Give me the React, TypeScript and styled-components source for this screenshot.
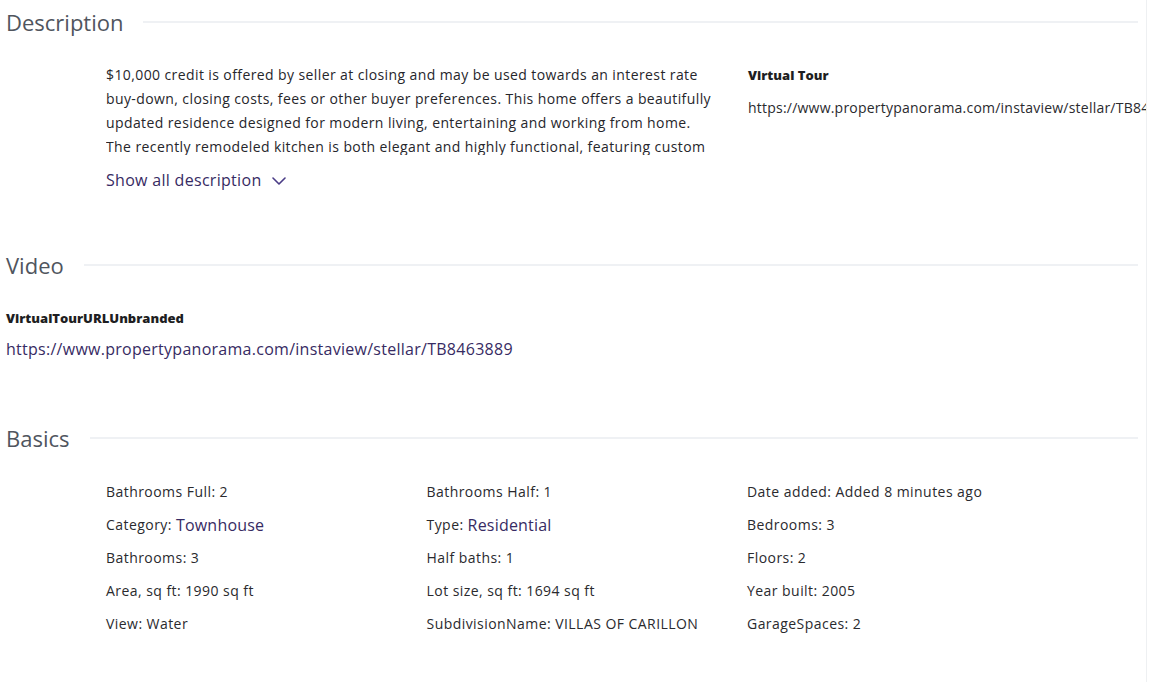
import styled, { createGlobalStyle } from 'styled-components';

const GlobalStyle = createGlobalStyle`
body {
	margin: 0;
	background: #ffffff;
	font-family: "Open Sans", Lato, Arial, sans-serif;
	color: #2a2a2e;
}
`;

const Page = styled.div`
width: 1132px;
min-height: 682px;
padding: 0 8px 0 6px;
border-right: 1px solid #eef0f2;
overflow: hidden;
`;

const Section = styled.section<{ $top: number }>`
margin-top: ${(p) => p.$top}px;
`;

const SectionHeader = styled.div<{ $gap: number }>`
display: flex;
align-items: center;
gap: ${(p) => p.$gap}px;
height: 44px;
`;

const SectionTitle = styled.h2`
margin: 0;
font-size: 22px;
font-weight: 400;
color: #50555e;
`;

const Divider = styled.div`
flex: 1;
height: 2px;
background: #eff1f4;
`;

const DescriptionBody = styled.div`
display: grid;
grid-template-columns: 606px 1fr;
column-gap: 36px;
padding-left: 100px;
margin-top: 19px;
`;

const DescriptionText = styled.p`
margin: 0;
max-height: 92px;
overflow: hidden;
font-size: 14px;
letter-spacing: 0.4px;
line-height: 24px;
color: #26262b;
`;

const ShowAll = styled.button`
display: flex;
align-items: center;
gap: 10px;
margin-top: 13px;
padding: 0;
border: none;
background: none;
font-family: inherit;
font-size: 16px;
letter-spacing: 0.3px;
line-height: 24px;
color: #372b63;
cursor: pointer;
svg {
	width: 14px;
	height: 8px;
	margin-top: 1px;
}
`;

const Field = styled.div`
white-space: nowrap;
`;

const FieldLabel = styled.div`
font-size: 13px;
font-weight: 800;
line-height: 24px;
color: #1e1e22;
`;

const PlainUrl = styled.div`
margin-top: 9px;
font-size: 14px;
letter-spacing: 0.22px;
line-height: 24px;
color: #2a2a2e;
`;

const LinkUrl = styled.a`
display: block;
margin-top: 7px;
font-size: 16px;
letter-spacing: 0.27px;
line-height: 24px;
color: #372b63;
text-decoration: none;
`;

const VideoBody = styled.div`
margin-top: 19px;
`;

const BasicsGrid = styled.div`
display: grid;
grid-template-columns: repeat(3, 320.5px);
grid-auto-rows: 33px;
padding-left: 100px;
margin-top: 15px;
`;

const BasicItem = styled.div`
display: flex;
align-items: center;
gap: 4px;
font-size: 14px;
letter-spacing: 0.45px;
color: #2a2a2e;
white-space: nowrap;
`;

const BasicLink = styled.a`
font-size: 16px;
letter-spacing: 0.2px;
color: #372b63;
text-decoration: none;
`;

type Basic = { label: string; value: string; link?: boolean };

const basics: Basic[] = [
	{ label: 'Bathrooms Full:', value: '2' },
	{ label: 'Bathrooms Half:', value: '1' },
	{ label: 'Date added:', value: 'Added 8 minutes ago' },
	{ label: 'Category:', value: 'Townhouse', link: true },
	{ label: 'Type:', value: 'Residential', link: true },
	{ label: 'Bedrooms:', value: '3' },
	{ label: 'Bathrooms:', value: '3' },
	{ label: 'Half baths:', value: '1' },
	{ label: 'Floors:', value: '2' },
	{ label: 'Area, sq ft:', value: '1990 sq ft' },
	{ label: 'Lot size, sq ft:', value: '1694 sq ft' },
	{ label: 'Year built:', value: '2005' },
	{ label: 'View:', value: 'Water' },
	{ label: 'SubdivisionName:', value: 'VILLAS OF CARILLON' },
	{ label: 'GarageSpaces:', value: '2' },
];

const description =
	'$10,000 credit is offered by seller at closing and may be used towards an interest rate buy-down, closing costs, fees or other buyer preferences. This home offers a beautifully updated residence designed for modern living, entertaining and working from home. The recently remodeled kitchen is both elegant and highly functional, featuring custom cabinetry.';

const tourUrl = 'https://www.propertypanorama.com/instaview/stellar/TB8463889';

function ChevronDown() {
	return (
		<svg viewBox="0 0 14 8" fill="none" stroke="#4a3c86" strokeWidth="1.6" strokeLinecap="round" strokeLinejoin="round">
			<polyline points="1,1 7,7 13,1" />
		</svg>
	);
}

export default function App() {
	return (
		<>
			<GlobalStyle />
			<Page>
				<Section $top={0}>
					<SectionHeader $gap={20}>
						<SectionTitle>Description</SectionTitle>
						<Divider />
					</SectionHeader>
					<DescriptionBody>
						<div>
							<DescriptionText>{description}</DescriptionText>
							<ShowAll>
								Show all description <ChevronDown />
							</ShowAll>
						</div>
						<Field>
							<FieldLabel>Virtual Tour</FieldLabel>
							<PlainUrl>{tourUrl}</PlainUrl>
						</Field>
					</DescriptionBody>
				</Section>

				<Section $top={51}>
					<SectionHeader $gap={20}>
						<SectionTitle>Video</SectionTitle>
						<Divider />
					</SectionHeader>
					<VideoBody>
						<FieldLabel>VirtualTourURLUnbranded</FieldLabel>
						<LinkUrl href="#">{tourUrl}</LinkUrl>
					</VideoBody>
				</Section>

				<Section $top={55}>
					<SectionHeader $gap={20}>
						<SectionTitle>Basics</SectionTitle>
						<Divider />
					</SectionHeader>
					<BasicsGrid>
						{basics.map((b) => (
							<BasicItem key={b.label}>
								{b.label}
								{b.link ? <BasicLink href="#">{b.value}</BasicLink> : <span>{b.value}</span>}
							</BasicItem>
						))}
					</BasicsGrid>
				</Section>
			</Page>
		</>
	);
}
